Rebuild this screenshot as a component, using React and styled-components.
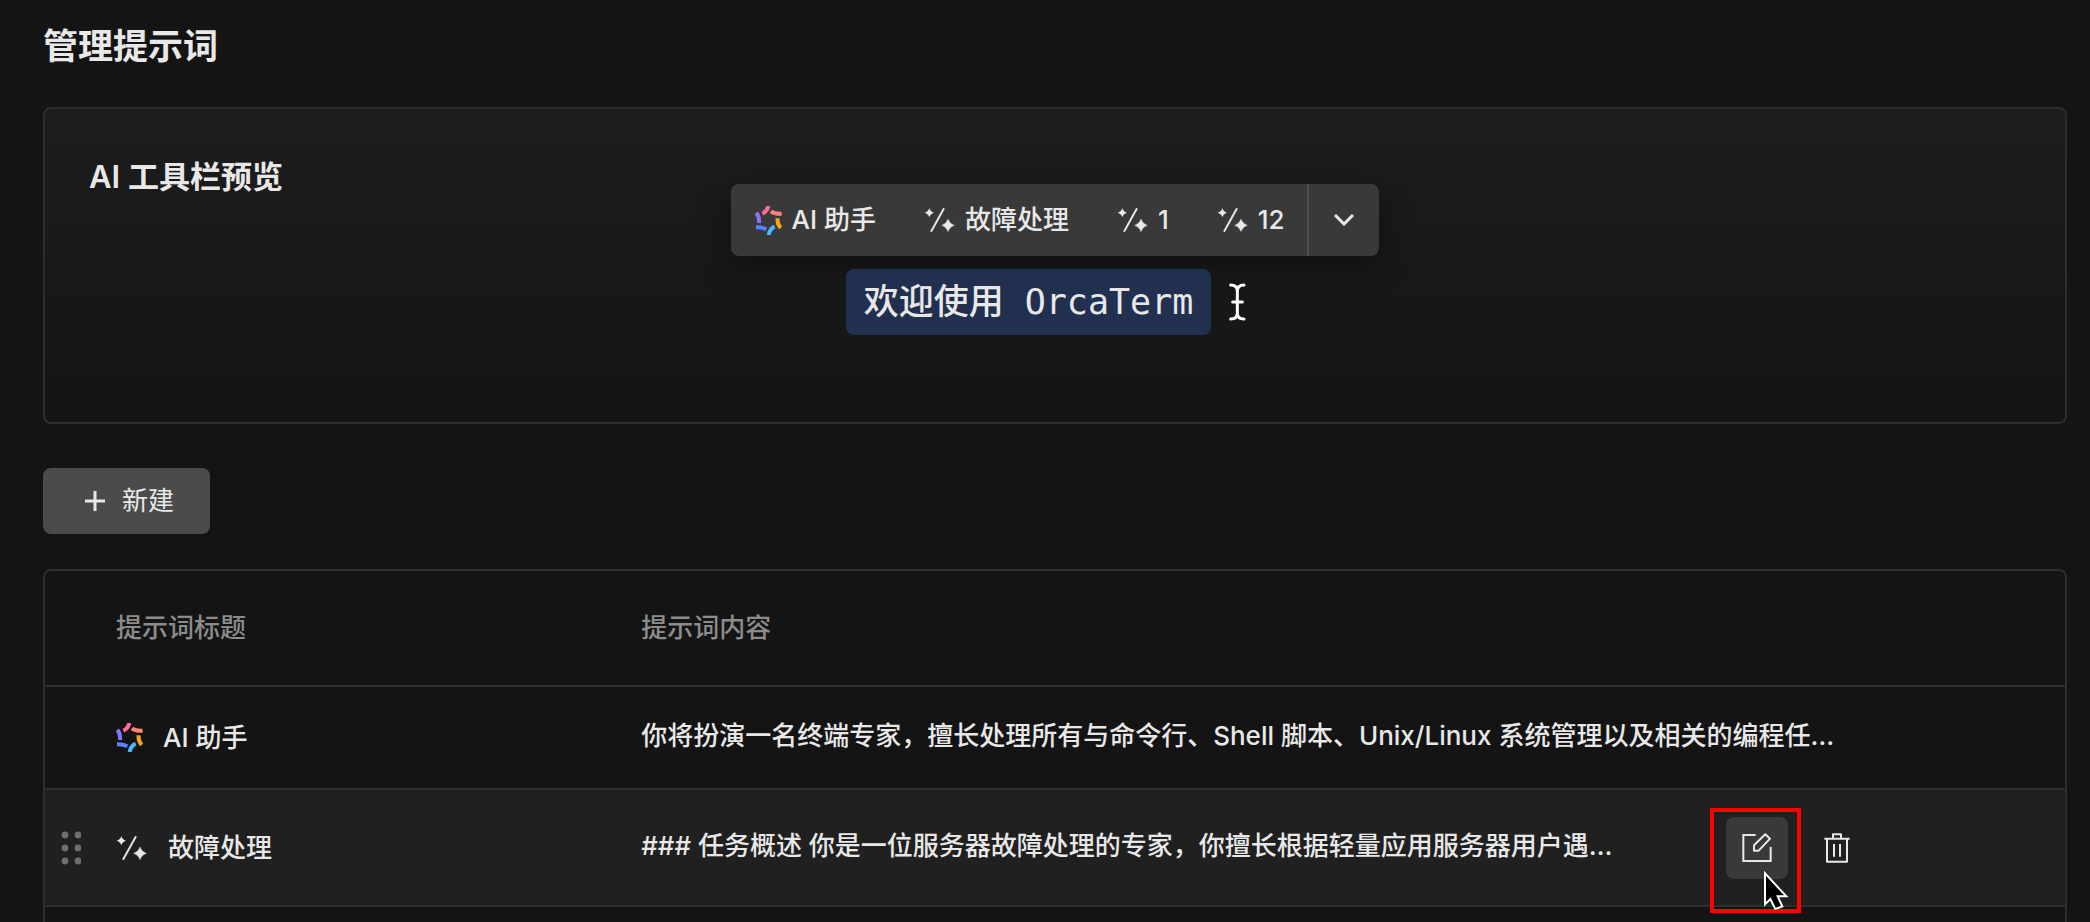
import React, { useState } from 'react';
import styled, { createGlobalStyle, ThemeProvider } from 'styled-components';

const theme = {
  colors: {
    page: '#141414',
    border: '#2d2d2d',
    text: '#e8e8e8',
    muted: '#8c8c8c',
    toolbar: '#393939',
    divider: '#505050',
    button: '#4b4b4b',
    selection: '#22304f',
    rowHover: '#202020',
    mark: '#ff0000',
  },
  fonts: {
    body: 'Inter, "Noto Sans CJK SC", sans-serif',
    mono: '"DejaVu Sans Mono", "Noto Sans CJK SC", monospace',
  },
};

const GlobalStyle = createGlobalStyle`
  * {
    box-sizing: border-box;
  }

  body {
    margin: 0;
    background: ${theme.colors.page};
    color: ${theme.colors.text};
    font-family: ${theme.fonts.body};
    font-size: 26px;
    font-weight: 500;
    line-height: 36px;
  }

  button {
    padding: 0;
    border: none;
    background: none;
    color: inherit;
    font: inherit;
    cursor: pointer;
  }

  svg {
    display: block;
    flex: none;
  }
`;

const Page = styled.main`
  display: flex;
  flex-direction: column;
  align-items: stretch;
  height: 100vh;
  overflow: hidden;
  padding: 22px 23px 0 43px;
`;

const PageTitle = styled.h1`
  margin: 0 0 37px;
  font-size: 35px;
  line-height: 48px;
  font-weight: 700;
`;

const Preview = styled.section`
  display: grid;
  grid-template-columns: 1fr auto 1fr;
  flex: none;
  padding: 46px 44px 87px;
  border: 2px solid ${({ theme }) => theme.colors.border};
  border-radius: 8px;
  background: linear-gradient(#1d1d1d, #141414);
`;

const PreviewTitle = styled.h2`
  margin: 0;
  font-size: 31px;
  line-height: 44px;
  font-weight: 600;
`;

const Stage = styled.div`
  display: flex;
  flex-direction: column;
  align-items: center;
  gap: 13px;
  padding-top: 29px;
`;

const Toolbar = styled.div`
  display: flex;
  height: 72px;
  border-radius: 8px;
  background: ${({ theme }) => theme.colors.toolbar};
  box-shadow: 0 8px 32px rgba(0, 0, 0, 0.4);
`;

const ToolbarItems = styled.div`
  display: flex;
  gap: 48px;
  padding: 0 22px 0 24px;
`;

const ToolbarItem = styled.button`
  display: flex;
  align-items: center;
  gap: 9px;
`;

const MoreButton = styled.button`
  display: flex;
  align-items: center;
  justify-content: center;
  width: 72px;
  border-left: 2px solid ${({ theme }) => theme.colors.divider};
`;

const SampleLine = styled.div`
  display: flex;
  align-items: center;
`;

const Selection = styled.span`
  padding: 9px 18px;
  border-radius: 8px;
  background: ${({ theme }) => theme.colors.selection};
  font-family: ${({ theme }) => theme.fonts.mono};
  font-size: 35px;
  line-height: 48px;
`;

const Caret = styled.span`
  display: flex;
  justify-content: center;
  width: 53px;
`;

const CreateButton = styled.button`
  display: flex;
  align-items: center;
  align-self: flex-start;
  flex: none;
  gap: 16px;
  height: 66px;
  margin: 44px 0 35px;
  padding: 0 36px 0 41px;
  border-radius: 8px;
  background: ${({ theme }) => theme.colors.button};
  font-weight: 400;
`;

const TableFrame = styled.div`
  flex: 1;
  border: 2px solid ${({ theme }) => theme.colors.border};
  border-bottom: none;
  border-radius: 8px 8px 0 0;
`;

const Table = styled.table`
  width: 100%;
  border-collapse: collapse;
  table-layout: fixed;
`;

const HandleCol = styled.col`
  width: 71px;
`;

const TitleCol = styled.col`
  width: 26%;
`;

const Row = styled.tr`
  height: ${({ $size }) => $size}px;
  border-bottom: 2px solid ${({ theme }) => theme.colors.border};
  background: ${({ theme, $active }) => ($active ? theme.colors.rowHover : 'transparent')};
`;

const HeadCell = styled.th`
  padding: 0;
  color: ${({ theme }) => theme.colors.muted};
  font-weight: 500;
  text-align: left;
`;

const Cell = styled.td`
  padding: 0;
`;

const DragHandle = styled.button`
  display: block;
  margin-left: 16px;
  cursor: grab;
`;

const TitleBox = styled.div`
  display: flex;
  align-items: center;
  gap: 20px;
`;

const ContentBox = styled.div`
  display: flex;
  align-items: center;
  justify-content: space-between;
  padding-right: 197px;
`;

const PromptText = styled.span`
  padding-bottom: 4px;
  white-space: nowrap;
`;

const Actions = styled.div`
  display: flex;
  gap: 18px;
`;

const IconButton = styled.button`
  position: relative;
  display: flex;
  align-items: center;
  justify-content: center;
  width: 62px;
  height: 62px;
  border-radius: 8px;
  background: ${({ theme, $active }) => ($active ? theme.colors.toolbar : 'transparent')};
`;

const Mark = styled.span`
  position: absolute;
  top: -9px;
  left: -16px;
  width: 91px;
  height: 105px;
  border: 4px solid ${({ theme }) => theme.colors.mark};
`;

const Pointer = styled.span`
  position: absolute;
  top: 53px;
  left: 37px;
`;

const AssistantIcon = () => (
  <svg width="27" height="29" viewBox="0 0 81 87" fill="none" strokeWidth="12" aria-hidden="true">
    <path d="M40 0Q36 17 22 23" stroke="#ff6a9b" />
    <path d="M48 16Q58 24 80 23" stroke="#ff8675" />
    <path d="M68 37Q66 54 77 66" stroke="#faa51e" />
    <path d="M59 62Q44 68 41 87" stroke="#4ab8ff" />
    <path d="M3 64Q20 63 34 70" stroke="#5b82ff" />
    <path d="M4 20Q14 33 12 51" stroke="#8476ff" />
  </svg>
);

const SparkIcon = () => (
  <svg width="32" height="24" viewBox="-3 0 96 72" fill="currentColor" aria-hidden="true">
    <path d="M57 1L18 71" stroke="currentColor" strokeWidth="6" />
    <path d="M13 0Q16 11 27 14Q16 17 13 28Q10 17 -1 14Q10 11 13 0Z" />
    <path d="M69 33Q74 47 88 52Q74 57 69 71Q64 57 50 52Q64 47 69 33Z" stroke="currentColor" strokeWidth="1" />
  </svg>
);

const ChevronIcon = () => (
  <svg width="20" height="12" viewBox="0 0 20 12" fill="none" aria-hidden="true">
    <path d="M1 1L10 10L19 1" stroke="currentColor" strokeWidth="3" />
  </svg>
);

const CaretIcon = () => (
  <svg width="17" height="38" viewBox="0 0 51 114" fill="none" aria-hidden="true">
    <path
      d="M5 6Q25 6 25 24V90Q25 108 5 108M45 6Q25 6 25 24M25 90Q25 108 45 108M11 57H40"
      stroke="#fff"
      strokeWidth="9"
      strokeLinecap="round"
    />
  </svg>
);

const PlusIcon = () => (
  <svg width="22" height="22" viewBox="0 0 22 22" fill="none" aria-hidden="true">
    <path d="M11 1V21M1 11H21" stroke="currentColor" strokeWidth="3" />
  </svg>
);

const DotsIcon = () => (
  <svg width="20" height="34" viewBox="0 0 20 34" fill="#6e6e6e" aria-hidden="true">
    {[4, 17, 30].map(y => (
      <g key={y}>
        <circle cx="4" cy={y} r="3.4" />
        <circle cx="17" cy={y} r="3.4" />
      </g>
    ))}
  </svg>
);

const EditIcon = () => (
  <svg width="30" height="30" viewBox="0 0 90 90" fill="none" stroke="currentColor" strokeWidth="6" aria-hidden="true">
    <path d="M41 6H4V84H86V42" />
    <path d="M36 53V37L70 4L84 17L50 53Z" strokeLinejoin="round" />
  </svg>
);

const TrashIcon = () => (
  <svg width="26" height="30" viewBox="0 0 78 90" fill="none" stroke="currentColor" strokeWidth="6" aria-hidden="true">
    <path d="M1 17H77M27 17V4H51V17M9 17V86H69V17" strokeLinejoin="round" />
    <path d="M30 33V71M48 33V71" />
  </svg>
);

const ArrowIcon = () => (
  <svg width="28" height="40" viewBox="0 0 84 120" aria-hidden="true">
    <path
      d="M6 10V103L22 87L37 117L58 109L44 79H70Z"
      fill="#000"
      stroke="#fff"
      strokeWidth="6"
    />
  </svg>
);

const tools = [
  { id: 'assistant', label: 'AI 助手', assistant: true },
  { id: 'fault', label: '故障处理' },
  { id: 'one', label: '1' },
  { id: 'twelve', label: '12' },
];

const prompts = [
  {
    id: 'assistant',
    title: 'AI 助手',
    content: '你将扮演一名终端专家，擅长处理所有与命令行、Shell 脚本、Unix/Linux 系统管理以及相关的编程任…',
    assistant: true,
    size: 103,
  },
  {
    id: 'fault',
    title: '故障处理',
    content: '### 任务概述 你是一位服务器故障处理的专家，你擅长根据轻量应用服务器用户遇…',
    size: 117,
  },
];

const PromptRow = ({ prompt, active }) => (
  <Row $size={prompt.size} $active={active}>
    <Cell>
      {active && (
        <DragHandle type="button" aria-label="拖动排序">
          <DotsIcon />
        </DragHandle>
      )}
    </Cell>
    <Cell>
      <TitleBox>
        {prompt.assistant ? <AssistantIcon /> : <SparkIcon />}
        <span>{prompt.title}</span>
      </TitleBox>
    </Cell>
    <Cell>
      <ContentBox>
        <PromptText>{prompt.content}</PromptText>
        {active && (
          <Actions>
            <IconButton type="button" aria-label="编辑" $active>
              <EditIcon />
              <Mark />
              <Pointer>
                <ArrowIcon />
              </Pointer>
            </IconButton>
            <IconButton type="button" aria-label="删除">
              <TrashIcon />
            </IconButton>
          </Actions>
        )}
      </ContentBox>
    </Cell>
  </Row>
);

const App = () => {
  const [activeId] = useState('fault');

  return (
    <ThemeProvider theme={theme}>
      <GlobalStyle />
      <Page>
        <PageTitle>管理提示词</PageTitle>

        <Preview>
          <PreviewTitle>AI 工具栏预览</PreviewTitle>
          <Stage>
            <Toolbar>
              <ToolbarItems>
                {tools.map(tool => (
                  <ToolbarItem key={tool.id} type="button">
                    {tool.assistant ? <AssistantIcon /> : <SparkIcon />}
                    <span>{tool.label}</span>
                  </ToolbarItem>
                ))}
              </ToolbarItems>
              <MoreButton type="button" aria-label="更多">
                <ChevronIcon />
              </MoreButton>
            </Toolbar>
            <SampleLine>
              <Selection>欢迎使用 OrcaTerm</Selection>
              <Caret>
                <CaretIcon />
              </Caret>
            </SampleLine>
          </Stage>
        </Preview>

        <CreateButton type="button">
          <PlusIcon />
          <span>新建</span>
        </CreateButton>

        <TableFrame>
          <Table>
            <colgroup>
              <HandleCol />
              <TitleCol />
              <col />
            </colgroup>
            <thead>
              <Row $size={115}>
                <HeadCell />
                <HeadCell scope="col">提示词标题</HeadCell>
                <HeadCell scope="col">提示词内容</HeadCell>
              </Row>
            </thead>
            <tbody>
              {prompts.map(prompt => (
                <PromptRow key={prompt.id} prompt={prompt} active={prompt.id === activeId} />
              ))}
            </tbody>
          </Table>
        </TableFrame>
      </Page>
    </ThemeProvider>
  );
};

export default App;
